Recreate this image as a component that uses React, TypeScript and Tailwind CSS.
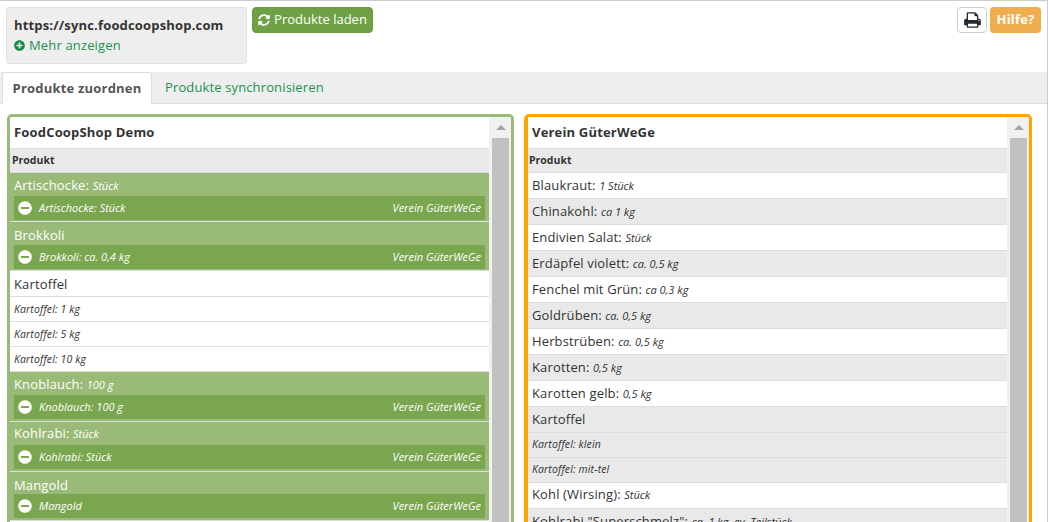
import { FaSyncAlt, FaPlusCircle, FaMinusCircle } from "react-icons/fa";

type Item = { name: string; unit?: string };

const font = { fontFamily: '"Open Sans", sans-serif' };

function Label({ item }: { item: Item }) {
  return (
    <span className="whitespace-nowrap tracking-[0.14px]">
      {item.name}
      {item.unit ? ": " : ""}
      {item.unit ? <i className="text-[11px] tracking-[0px]">{item.unit}</i> : null}
    </span>
  );
}

function Mapped({ item, mapped, rowH = "h-[49px]", topC = "h-[23px] pt-[3px]" }: { item: Item; mapped: string; rowH?: string; topC?: string }) {
  return (
    <div className={`${rowH} shrink-0 border-b border-[#dddddd] bg-[#9aba77] px-[4px] text-white`}>
      <div className={`flex items-center text-[13px] ${topC}`}>
        <Label item={item} />
      </div>
      <div className="flex h-[24px] items-center justify-between bg-[#7aa64f] pl-[4px] pr-[4px] text-[11px] italic">
        <span className="flex items-center">
          <FaMinusCircle className="mr-[7px] text-[14px] text-white" />
          {mapped}
        </span>
        <span>Verein GüterWeGe</span>
      </div>
    </div>
  );
}

function Row({ item, gray, extra = "" }: { item: Item; gray?: boolean; extra?: string }) {
  return (
    <div className={`flex h-[26px] shrink-0 items-center border-b border-[#dddddd] pl-[4px] text-[13px] text-[#333333] ${extra} ${gray ? "bg-[#e9e9e9]" : "bg-white"}`}>
      <Label item={item} />
    </div>
  );
}

function SubRow({ text, gray, extra = "" }: { text: string; gray?: boolean; extra?: string }) {
  return (
    <div className={`flex h-[25px] shrink-0 items-center border-b border-[#dddddd] pl-[4px] text-[10.5px] italic tracking-[0.13px] text-[#333333] ${extra} ${gray ? "bg-[#e9e9e9]" : "bg-white"}`}>
      {text}
    </div>
  );
}

function Panel({ title, color, w, headPl, children }: { title: string; color: string; w: string; headPl: string; children: React.ReactNode }) {
  return (
    <div className={`flex h-[430px] ${w} shrink-0 overflow-hidden rounded-t-[5px] border-[3px] ${color}`}>
      <div className="flex w-[479px] shrink-0 flex-col bg-white">
        <div className="flex h-[31px] shrink-0 items-center pl-[4px] text-[13px] font-bold tracking-[0.18px] text-[#333333]">{title}</div>
        <div className={`flex h-[25px] shrink-0 items-center border-y border-[#dddddd] bg-[#e9e9e9] ${headPl} text-[10.5px] font-bold text-[#333333]`}>Produkt</div>
        {children}
      </div>
      <div className="flex w-[22px] shrink-0 flex-col items-center bg-[#f1f1f1] pl-[1px]">
        <div className="flex h-[21px] w-full items-center justify-center">
          <div className="h-0 w-0 border-x-[5px] border-b-[5px] border-x-transparent border-b-[#a3a3a3]" />
        </div>
        <div className="w-[17px] flex-1 bg-[#c1c1c1]" />
      </div>
    </div>
  );
}

export default function App() {
  return (
    <div style={font} className="h-[522px] w-[1048px] overflow-hidden border-r border-t border-[#cccccc] bg-white">
      <div className="flex h-[71px] items-start justify-between pl-[6px] pr-[6px] pt-[6px]">
        <div className="flex items-start gap-[5px]">
          <div className="h-[57px] w-[241px] rounded-[3px] border border-[#e2e2e2] bg-[#eeeeee] pl-[7px] pt-[8px]">
            <div className="text-[13px] font-bold leading-[18px] tracking-[0.17px] text-[#333333]">https://sync.foodcoopshop.com</div>
            <div className="mt-[2px] flex items-center text-[13px] leading-[18px] tracking-[0.15px] text-[#1a9150]">
              <FaPlusCircle className="mr-[4px] text-[11px] text-[#0f8a45]" />
              Mehr anzeigen
            </div>
          </div>
          <button className="flex h-[26px] w-[121px] items-center justify-center rounded-[4px] border border-[#6b9d3f] bg-[#6fa045] text-[13px] text-white">
            <FaSyncAlt className="mr-[4px] text-[12px]" />
            Produkte laden
          </button>
        </div>
        <div className="flex items-start gap-[3px]">
          <div className="flex h-[26px] w-[30px] items-center justify-center rounded-[4px] border border-[#cccccc] bg-white pl-[1px] text-[#222a35]">
            <svg width="17" height="18" viewBox="0 0 1664 1792" fill="currentColor">
              <path
                fillRule="evenodd"
                d="M384 1536h896v-256H384v256zm0-640h896V512h-160q-40 0-68-28t-28-68V256H384v640zm1152 64q0-26-19-45t-45-19-45 19-19 45 19 45 45 19 45-19 19-45zm128 0v416q0 13-9.500 22.500t-22.500 9.500h-224v160q0 40-28 68t-68 28H352q-40 0-68-28t-28-68v-160H32q-13 0-22.500-9.500T0 1376V960q0-79 56.500-135.500T192 768h64V224q0-40 28-68t68-28h672q40 0 88 20t76 48l152 152q28 28 48 76t20 88v256h64q79 0 135.500 56.500T1664 960z"
              />
            </svg>
          </div>
          <div className="flex h-[26px] w-[51px] items-center justify-center rounded-[4px] bg-[#f0ad4e] text-[13px] font-bold tracking-[0.2px] text-white">Hilfe?</div>
        </div>
      </div>
      <div className="flex h-[32px] items-end border-b border-[#dddddd] bg-[#eeeeee] pl-[2px]">
        <div className="-mb-[1px] flex h-[32px] w-[150px] items-center justify-center rounded-t-[3px] border-x border-t border-[#dddddd] bg-white text-[13px] font-bold tracking-[0.2px] text-[#555555]">Produkte zuordnen</div>
        <div className="flex h-[31px] items-center pl-[13px] text-[13px] tracking-[0.13px] text-[#1a9150]">Produkte synchronisieren</div>
      </div>
      <div className="flex gap-[10px] pl-[7px] pt-[10px]">
        <Panel title="FoodCoopShop Demo" color="border-[#9aba77]" w="w-[507px]" headPl="pl-[2px]">
          <Mapped item={{ name: "Artischocke", unit: "Stück" }} mapped="Artischocke: Stück" />
          <Mapped item={{ name: "Brokkoli" }} mapped="Brokkoli: ca. 0,4 kg" topC="h-[23px] pt-[5px] tracking-[0.3px]" />
          <Row item={{ name: "Kartoffel" }} extra="pt-[2px]" />
          <SubRow text="Kartoffel: 1 kg" extra="pt-[2px]" />
          <SubRow text="Kartoffel: 5 kg" extra="pt-[2px]" />
          <SubRow text="Kartoffel: 10 kg" extra="pt-[2px]" />
          <Mapped item={{ name: "Knoblauch", unit: "100 g" }} mapped="Knoblauch: 100 g" rowH="h-[50px]" />
          <Mapped item={{ name: "Kohlrabi", unit: "Stück" }} mapped="Kohlrabi: Stück" rowH="h-[50px]" topC="h-[23px] pt-[1px]" />
          <Mapped item={{ name: "Mangold" }} mapped="Mangold" topC="h-[22px] pt-[5px]" />
        </Panel>
        <Panel title="Verein GüterWeGe" color="border-[#ffa500] border-l-[4px]" w="w-[508px]" headPl="pl-[1px]">
          <Row item={{ name: "Blaukraut", unit: "1 Stück" }} />
          <Row gray item={{ name: "Chinakohl", unit: "ca 1 kg" }} />
          <Row item={{ name: "Endivien Salat", unit: "Stück" }} />
          <Row gray item={{ name: "Erdäpfel violett", unit: "ca. 0,5 kg" }} />
          <Row item={{ name: "Fenchel mit Grün", unit: "ca 0,3 kg" }} />
          <Row gray item={{ name: "Goldrüben", unit: "ca. 0,5 kg" }} />
          <Row item={{ name: "Herbstrüben", unit: "ca. 0,5 kg" }} />
          <Row gray item={{ name: "Karotten", unit: "0,5 kg" }} />
          <Row item={{ name: "Karotten gelb", unit: "0,5 kg" }} />
          <Row gray item={{ name: "Kartoffel" }} />
          <SubRow gray text="Kartoffel: klein" />
          <SubRow gray text="Kartoffel: mit-tel" />
          <Row item={{ name: "Kohl (Wirsing)", unit: "Stück" }} extra="pb-[2px]" />
          <Row gray item={{ name: 'Kohlrabi "Superschmelz"', unit: "ca. 1 kg, ev. Teilstück" }} />
        </Panel>
      </div>
    </div>
  );
}
